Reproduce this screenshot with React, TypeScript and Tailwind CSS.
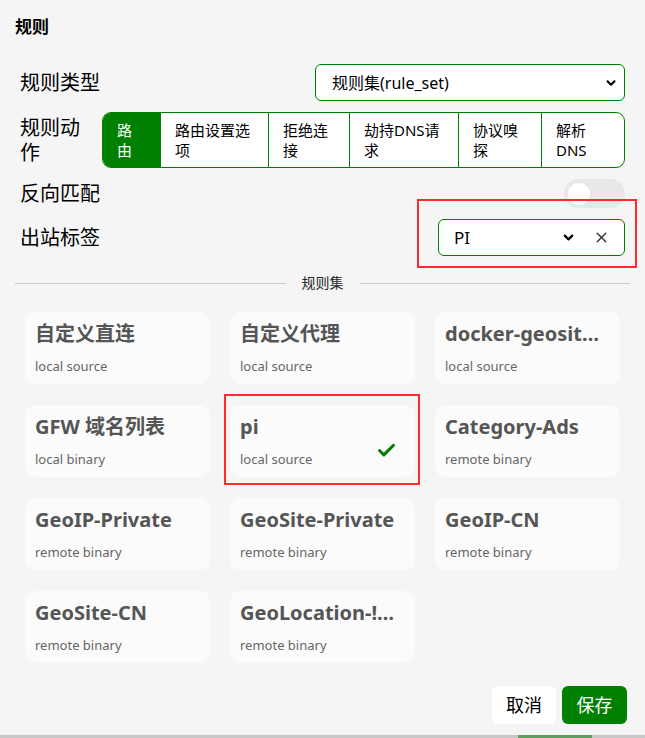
import React from 'react';
import { ChevronDown, X, Check } from 'lucide-react';

const actions = [
  { label: '路由', w: 'w-[57px]' },
  { label: '路由设置选项', w: 'w-[108px]' },
  { label: '拒绝连接', w: 'w-[81px]' },
  { label: '劫持DNS请求', w: 'w-[109px]' },
  { label: '协议嗅探', w: 'w-[83px]' },
  { label: '解析DNS', w: 'flex-1' },
];

const ruleSets = [
  { name: '自定义直连', type: 'local source' },
  { name: '自定义代理', type: 'local source' },
  { name: 'docker-geosite-cn', type: 'local source' },
  { name: 'GFW 域名列表', type: 'local binary' },
  { name: 'pi', type: 'local source', selected: true },
  { name: 'Category-Ads', type: 'remote binary' },
  { name: 'GeoIP-Private', type: 'remote binary' },
  { name: 'GeoSite-Private', type: 'remote binary' },
  { name: 'GeoIP-CN', type: 'remote binary' },
  { name: 'GeoSite-CN', type: 'remote binary' },
  { name: 'GeoLocation-!CN', type: 'remote binary' },
];

const App: React.FC = () => {
  return (
    <div
      className="relative flex h-[738px] w-[645px] flex-col overflow-hidden bg-[#f5f5f5] text-black"
      style={{ fontFamily: '"Noto Sans", "Noto Sans CJK SC", sans-serif' }}
    >
      <div className="px-[15px]">
        <h2 className="pt-[14px] text-[17px] font-bold leading-[26px]">规则</h2>

        <div className="mt-[24px] px-[5px]">
          {/* 规则类型 */}
          <div className="flex items-center justify-between">
            <span className="text-[20px] leading-[28px]">规则类型</span>
            <div className="flex h-[37px] w-[310px] items-center justify-between rounded-[6px] border border-[#008000] bg-white pl-[16px] pr-[6px] text-[16px]">
              <span>规则集(rule_set)</span>
              <ChevronDown size={14} strokeWidth={3.5} />
            </div>
          </div>

          {/* 规则动作 */}
          <div className="mt-[11px] flex items-center">
            <span className="w-[70px] mr-[12px] text-[20px] leading-[25px]">规则动作</span>
            <div className="flex h-[56px] flex-1 overflow-hidden rounded-[9px] border border-[#008000] bg-white text-[15px] leading-[20px]">
              {actions.map((a, i) => (
                <div
                  key={a.label}
                  className={`${a.w} flex items-center px-[14px] ${i > 0 ? 'border-l border-[#008000]' : ''} ${i === 0 ? 'bg-[#008000] text-white' : ''}`}
                >
                  <span>{a.label}</span>
                </div>
              ))}
            </div>
          </div>

          {/* 反向匹配 */}
          <div className="mt-[11px] flex items-center justify-between">
            <span className="text-[20px] leading-[28px]">反向匹配</span>
            <div className="flex h-[29px] w-[61px] items-center rounded-full bg-[#e8e8e8] px-[4px]">
              <div className="h-[22px] w-[22px] rounded-full bg-white" />
            </div>
          </div>

          {/* 出站标签 */}
          <div className="mt-[11px] flex items-center justify-between">
            <span className="text-[20px] leading-[28px]">出站标签</span>
            <div className="flex h-[37px] w-[187px] items-center rounded-[6px] border border-[#008000] bg-white pl-[15px] pr-[14px] text-[17px]">
              <span className="flex-1">PI</span>
              <ChevronDown size={15} strokeWidth={3.5} className="mr-[17px]" />
              <X size={17} strokeWidth={2} className="text-[#333]" />
            </div>
          </div>
        </div>

        {/* divider */}
        <div className="mt-[17px] flex items-center gap-[16px]">
          <div className="h-px flex-1 bg-[#cccccc]" />
          <span className="text-[14px] leading-[20px] text-[#222]">规则集</span>
          <div className="h-px flex-1 bg-[#cccccc]" />
        </div>

        {/* rule sets */}
        <div className="mt-[19px] grid grid-cols-3 gap-x-[20px] gap-y-[21px] px-[10px]">
          {ruleSets.map((r) => (
            <div key={r.name} className="relative flex h-[72px] flex-col rounded-[10px] bg-[#fbfbfb] px-[10px] pt-[8px]">
              <span className="truncate text-[20px] font-bold leading-[28px] text-[#555]">{r.name}</span>
              <span className="mt-[9px] text-[13px] leading-[18px] text-[#666]">{r.type}</span>
              {r.selected && (
                <Check size={21} strokeWidth={3.5} className="absolute bottom-[16px] right-[18px] text-[#008000]" />
              )}
            </div>
          ))}
        </div>

        {/* footer */}
        <div className="mt-[23px] flex justify-end gap-[6px] pr-[3px]">
          <button className="h-[38px] w-[64px] rounded-[6px] bg-white text-[18px]">取消</button>
          <button className="h-[38px] w-[65px] rounded-[6px] bg-[#008000] text-[18px] text-white">保存</button>
        </div>
      </div>

      {/* page edge behind the dialog */}
      <div className="mt-auto flex h-[3px] bg-[#c8c8c8]">
        <div className="w-[518px]" />
        <div className="w-[74px] bg-[#5f9f5f]" />
      </div>

      {/* annotation boxes */}
      <div className="pointer-events-none absolute left-[417px] top-[199px] h-[69px] w-[220px] border-2 border-[#ff2a2a]" />
      <div className="pointer-events-none absolute left-[224px] top-[394px] h-[91px] w-[196px] border-2 border-[#ff2a2a]" />
    </div>
  );
};

export default App;
